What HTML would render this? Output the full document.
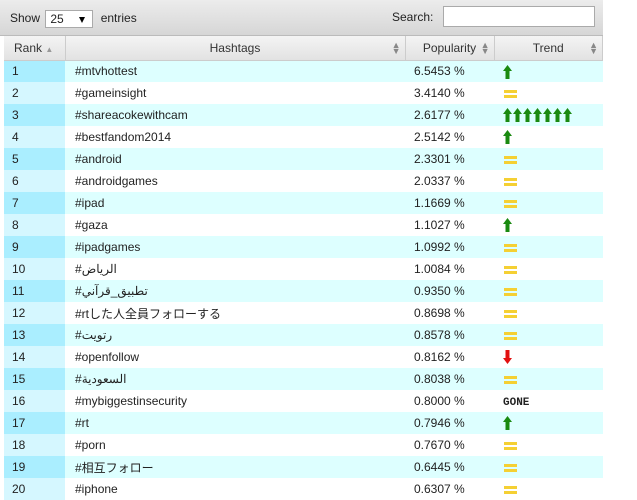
<!DOCTYPE html>
<html><head><meta charset="utf-8"><style>
body{margin:0;background:#fff;font-family:"Liberation Sans","Noto Sans CJK JP",sans-serif;font-size:12px;color:#222;width:637px;height:499px;overflow:hidden;position:relative}
.tb{position:absolute;left:0;top:0;width:603px;height:35px;background:linear-gradient(#ececec,#d6d6d6);border-bottom:1px solid #bbb}
.tb .l{position:absolute;left:10px;top:10px}
.sel{display:inline-block;width:48px;height:18px;border:1px solid #aaa;background:#fff;vertical-align:middle;margin:0 4px 0 2px;position:relative;box-sizing:border-box}
.sel span{position:absolute;left:4px;top:1px}
.sel i{position:absolute;right:7px;top:6px;border:3px solid transparent;border-top:6px solid #000;border-bottom:0}
.tb .r{position:absolute;left:392px;top:10px}
.inp{position:absolute;left:443px;top:6px;width:152px;height:21px;border:1px solid #aaa;background:#fff;box-sizing:border-box}
table{position:absolute;left:4px;top:36px;border-collapse:collapse;width:599px;table-layout:fixed}
th{height:24px;font-weight:normal;color:#333;background:linear-gradient(#f4f4f4,#e2e2e2);border-right:1px solid #ccc;border-bottom:1px solid #ccc;position:relative;padding:0;box-sizing:border-box}
th .s{position:absolute;right:4px;top:6px;font-size:9px;color:#888;line-height:6px}
td{height:22px;padding:0 0 0 9px;box-sizing:border-box;white-space:nowrap;overflow:hidden}
td:first-child{padding-left:8px}
td:nth-child(2){padding-left:10px}
tr.o td{background:#ddffff}tr.o td:first-child{background:#aaeeff}
tr.e td{background:#fff}tr.e td:first-child{background:#d5f7ff}
.eq{display:inline-block;width:13px;height:2px;border-top:3px solid #f5d033;border-bottom:3px solid #f5d033;margin-left:1px;vertical-align:middle}
svg{vertical-align:middle}
.g{font-family:"Liberation Mono",monospace;font-weight:bold;font-size:11px;color:#222}
</style></head><body>
<div class="tb"><div class="l">Show <span class="sel"><span>25</span><i></i></span> entries</div><div class="r">Search:</div><div class="inp"></div></div>
<table>
<colgroup><col style="width:61px"><col style="width:340px"><col style="width:89px"><col></colgroup>
<tr><th style="text-align:left;padding-left:10px">Rank <span style="font-size:8px;color:#999">&#9650;</span></th><th>Hashtags<span class="s">&#9650;<br>&#9660;</span></th><th>Popularity<span class="s">&#9650;<br>&#9660;</span></th><th>Trend<span class="s">&#9650;<br>&#9660;</span></th></tr>
<tr class="o"><td>1</td><td>#mtvhottest</td><td>6.5453 %</td><td><svg width="10" height="14"><path d="M4.5 0L9 6H6.5V14H2.5V6H0Z" fill="#1a8a10"/></svg></td></tr>
<tr class="e"><td>2</td><td>#gameinsight</td><td>3.4140 %</td><td><span class="eq"></span></td></tr>
<tr class="o"><td>3</td><td>#shareacokewithcam</td><td>2.6177 %</td><td><svg width="70" height="14" fill="#1a8a10"><path d="M4.5 0L9 6H6.5V14H2.5V6H0Z"/><path transform="translate(10)" d="M4.5 0L9 6H6.5V14H2.5V6H0Z"/><path transform="translate(20)" d="M4.5 0L9 6H6.5V14H2.5V6H0Z"/><path transform="translate(30)" d="M4.5 0L9 6H6.5V14H2.5V6H0Z"/><path transform="translate(40)" d="M4.5 0L9 6H6.5V14H2.5V6H0Z"/><path transform="translate(50)" d="M4.5 0L9 6H6.5V14H2.5V6H0Z"/><path transform="translate(60)" d="M4.5 0L9 6H6.5V14H2.5V6H0Z"/></svg></td></tr>
<tr class="e"><td>4</td><td>#bestfandom2014</td><td>2.5142 %</td><td><svg width="10" height="14"><path d="M4.5 0L9 6H6.5V14H2.5V6H0Z" fill="#1a8a10"/></svg></td></tr>
<tr class="o"><td>5</td><td>#android</td><td>2.3301 %</td><td><span class="eq"></span></td></tr>
<tr class="e"><td>6</td><td>#androidgames</td><td>2.0337 %</td><td><span class="eq"></span></td></tr>
<tr class="o"><td>7</td><td>#ipad</td><td>1.1669 %</td><td><span class="eq"></span></td></tr>
<tr class="e"><td>8</td><td>#gaza</td><td>1.1027 %</td><td><svg width="10" height="14"><path d="M4.5 0L9 6H6.5V14H2.5V6H0Z" fill="#1a8a10"/></svg></td></tr>
<tr class="o"><td>9</td><td>#ipadgames</td><td>1.0992 %</td><td><span class="eq"></span></td></tr>
<tr class="e"><td>10</td><td>#الرياض</td><td>1.0084 %</td><td><span class="eq"></span></td></tr>
<tr class="o"><td>11</td><td>#تطبيق_قرآني</td><td>0.9350 %</td><td><span class="eq"></span></td></tr>
<tr class="e"><td>12</td><td>#rtした人全員フォローする</td><td>0.8698 %</td><td><span class="eq"></span></td></tr>
<tr class="o"><td>13</td><td>#رتويت</td><td>0.8578 %</td><td><span class="eq"></span></td></tr>
<tr class="e"><td>14</td><td>#openfollow</td><td>0.8162 %</td><td><svg width="10" height="14"><path d="M4.5 14L9 8H6.5V0H2.5V8H0Z" fill="#e21010"/></svg></td></tr>
<tr class="o"><td>15</td><td>#السعودية</td><td>0.8038 %</td><td><span class="eq"></span></td></tr>
<tr class="e"><td>16</td><td>#mybiggestinsecurity</td><td>0.8000 %</td><td><span class="g">GONE</span></td></tr>
<tr class="o"><td>17</td><td>#rt</td><td>0.7946 %</td><td><svg width="10" height="14"><path d="M4.5 0L9 6H6.5V14H2.5V6H0Z" fill="#1a8a10"/></svg></td></tr>
<tr class="e"><td>18</td><td>#porn</td><td>0.7670 %</td><td><span class="eq"></span></td></tr>
<tr class="o"><td>19</td><td>#相互フォロー</td><td>0.6445 %</td><td><span class="eq"></span></td></tr>
<tr class="e"><td>20</td><td>#iphone</td><td>0.6307 %</td><td><span class="eq"></span></td></tr>
</table>
</body></html>
